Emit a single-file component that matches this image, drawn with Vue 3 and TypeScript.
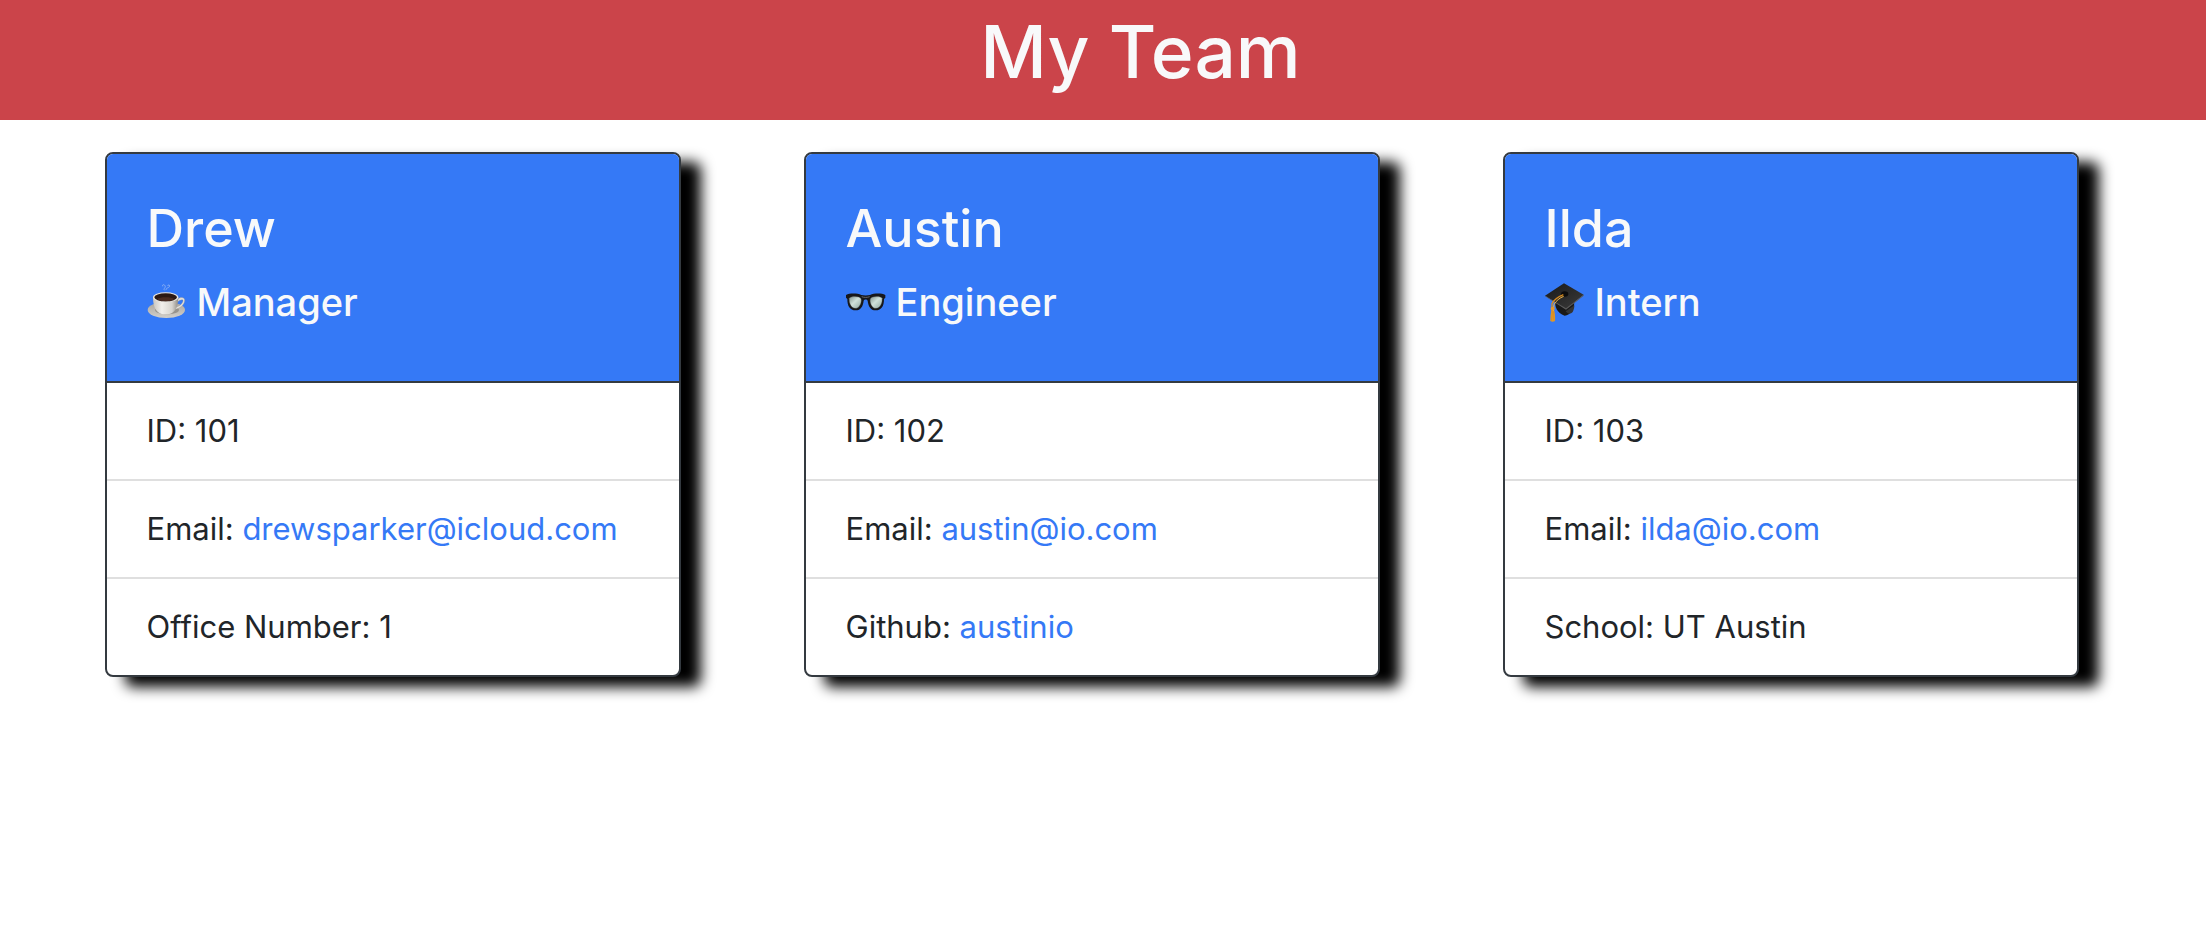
<script setup lang="ts">
type Role = 'Manager' | 'Engineer' | 'Intern'

interface Detail {
  label: string
  value: string
  href?: string
}

interface Member {
  name: string
  role: Role
  details: Detail[]
}

const members: Member[] = [
  {
    name: 'Drew',
    role: 'Manager',
    details: [
      { label: 'ID', value: '101' },
      { label: 'Email', value: 'drewsparker@icloud.com', href: 'mailto:drewsparker@icloud.com' },
      { label: 'Office Number', value: '1' },
    ],
  },
  {
    name: 'Austin',
    role: 'Engineer',
    details: [
      { label: 'ID', value: '102' },
      { label: 'Email', value: 'austin@io.com', href: 'mailto:austin@io.com' },
      { label: 'Github', value: 'austinio', href: 'https://github.com/austinio' },
    ],
  },
  {
    name: 'Ilda',
    role: 'Intern',
    details: [
      { label: 'ID', value: '103' },
      { label: 'Email', value: 'ilda@io.com', href: 'mailto:ilda@io.com' },
      { label: 'School', value: 'UT Austin' },
    ],
  },
]
</script>

<template>
  <header class="banner">
    <h1>My Team</h1>
  </header>

  <main class="team">
    <article v-for="member in members" :key="member.name" class="card">
      <div class="card-head">
        <h2>{{ member.name }}</h2>
        <h3>
          <svg v-if="member.role === 'Manager'" class="icon" viewBox="0 0 120 120" aria-hidden="true">
            <defs>
              <linearGradient id="cup" x1="0" x2="1" y1="0" y2="0">
                <stop offset="0" stop-color="#c9c5be" />
                <stop offset=".35" stop-color="#f1efeb" />
                <stop offset=".75" stop-color="#d8d5cf" />
                <stop offset="1" stop-color="#8f8b85" />
              </linearGradient>
              <linearGradient id="saucer" x1="0" x2="0" y1="0" y2="1">
                <stop offset="0" stop-color="#a9a59f" />
                <stop offset="1" stop-color="#d2cfc9" />
              </linearGradient>
            </defs>
            <path d="M53 25c-6-5 5-8 1-14-3-5-9-3-7 2M58 24c-4-6 9-6 10-12 0-4-6-4-6 0" fill="none" stroke="#a3bff2" stroke-width="3" opacity=".7" />
            <ellipse cx="58" cy="84" rx="56" ry="24" fill="url(#saucer)" />
            <ellipse cx="60" cy="84" rx="36" ry="13" fill="#98948d" />
            <path d="M90 52c12-9 25-6 23 5-2 12-14 23-30 25l2-6c12-3 21-10 23-19 1-6-8-4-17 3z" fill="#e4e2dd" stroke="#8d8983" stroke-width="1" />
            <path d="M18 46c0 24 7 40 18 46 9 6 31 6 40 0 11-6 18-22 18-46z" fill="url(#cup)" />
            <ellipse cx="56" cy="46" rx="38" ry="15" fill="#e9e6e1" />
            <ellipse cx="56" cy="46" rx="34" ry="12" fill="#2b1914" />
            <path d="M30 51c9-7 43-7 52 0-11 9-41 9-52 0z" fill="#4a2c22" />
          </svg>

          <svg v-else-if="member.role === 'Engineer'" class="icon" viewBox="0 0 120 120" aria-hidden="true">
            <defs>
              <linearGradient id="lens" x1="0" x2="1" y1="0" y2="1">
                <stop offset="0" stop-color="#82958f" />
                <stop offset=".45" stop-color="#d0e1da" />
                <stop offset="1" stop-color="#8fa7a1" />
              </linearGradient>
            </defs>
            <path d="M0 39c12-6 34-5 46 0 7 2 19 2 26 0 12-5 34-6 46 0l0 8-4 4c0 21-7 34-25 34-16 0-22-13-24-29-2-5-10-5-12 0-2 16-8 29-24 29C11 85 4 72 4 51l-4-4z" fill="#171719" />
            <path d="M10 49c3-7 31-7 35 1 3 10-4 29-17 29S8 62 10 49z" fill="url(#lens)" stroke="#4b5050" stroke-width="1" />
            <path d="M108 49c-3-7-31-7-35 1-3 10 4 29 17 29s20-17 18-30z" fill="url(#lens)" stroke="#4b5050" stroke-width="1" />
            <path d="M47 44c7 3 17 3 24 0" fill="none" stroke="#64666a" stroke-width="3" />
          </svg>

          <svg v-else class="icon" viewBox="0 0 120 120" aria-hidden="true">
            <defs>
              <linearGradient id="board" x1="0" x2="1" y1="0" y2="1">
                <stop offset="0" stop-color="#181818" />
                <stop offset="1" stop-color="#3c3c3c" />
              </linearGradient>
            </defs>
            <path d="M30 56c0 19 5 36 29 45 16-3 28-15 29-42l-6-8z" fill="#191919" />
            <path d="M62 88l26-18c0 8-2 14-5 20-6 6-14 8-21-2z" fill="#343434" />
            <path d="M57 4l59 34-53 43L0 41z" fill="url(#board)" />
            <path d="M0 41l63 38 53-41v3L63 83 0 43z" fill="#5a5a5a" />
            <ellipse cx="59" cy="36" rx="11" ry="8" fill="#0c0c0c" />
            <path d="M55 38C43 43 27 53 21 65v24" fill="none" stroke="#d98c1f" stroke-width="4" />
            <path d="M56 43C45 47 32 57 27 68l-2 21" fill="none" stroke="#f5b94a" stroke-width="3" />
            <circle cx="23" cy="80" r="6" fill="#e5982b" />
            <path d="M19 86h9c2 10 3 20 2 31-4 3-10 3-14 0 0-11 1-21 3-31z" fill="#e59a28" />
            <path d="M22 88l-2 28M26 88l1 28" fill="none" stroke="#b56d12" stroke-width="1" />
          </svg>
          <span>{{ member.role }}</span>
        </h3>
      </div>
      <ul class="details">
        <li v-for="detail in member.details" :key="detail.label">
          {{ detail.label }}:
          <a v-if="detail.href" :href="detail.href">{{ detail.value }}</a>
          <template v-else>{{ detail.value }}</template>
        </li>
      </ul>
    </article>
  </main>
</template>

<style>
body {
  margin: 0;
  background: #fff;
}
</style>

<style scoped>
.banner,
.team {
  font-family: Inter, "Liberation Sans", sans-serif;
}

.banner {
  padding: 4px 0 20px 75px;
  background: #cb444a;
  color: #f8f9fa;
  text-align: center;
}

h1,
h2,
h3 {
  margin: 0;
  font-weight: 500;
}

h1 {
  font-size: 73px;
  line-height: 96px;
}

.team {
  display: grid;
  grid-template-columns: repeat(3, 1fr);
  justify-items: center;
  padding: 32px 66px 32px 43px;
}

.card {
  box-sizing: border-box;
  width: 576px;
  max-width: 100%;
  border: 2px solid #343a40;
  border-radius: 8px;
  background: #fff;
  box-shadow: 20px 10px 14px #000;
}

.card-head {
  padding: 41px 40px 55px;
  border-bottom: 2px solid #343a40;
  border-radius: 6px 6px 0 0;
  background: #3579f6;
  color: #f8f9fa;
}

h2 {
  margin-bottom: 16px;
  font-size: 52px;
  line-height: 67px;
}

h3 {
  display: flex;
  align-items: center;
  gap: 10px;
  font-size: 38px;
  line-height: 48px;
}

.icon {
  width: 40px;
  height: 40px;
  flex: none;
}

.details {
  margin: 0;
  padding: 0;
  list-style: none;
  color: #212529;
  font-size: 31px;
  line-height: 48px;
}

.details li {
  padding: 24px 40px;
}

.details li + li {
  border-top: 2px solid #dfdfdf;
}

.details a {
  color: #3579f6;
  text-decoration: none;
}
</style>
